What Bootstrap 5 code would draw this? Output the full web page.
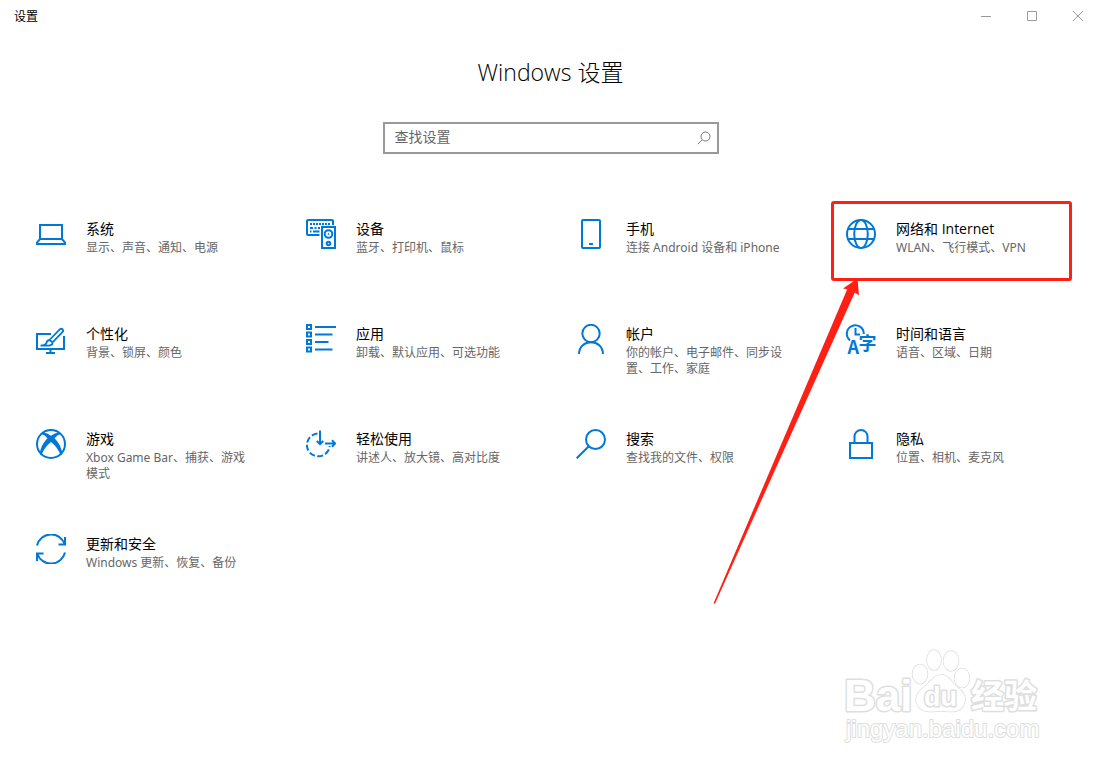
<!DOCTYPE html>
<html lang="zh-CN">
<head>
<meta charset="utf-8">
<meta name="viewport" content="width=device-width, initial-scale=1">
<title>设置</title>
<link href="https://cdn.jsdelivr.net/npm/bootstrap@5.3.0/dist/css/bootstrap.min.css" rel="stylesheet">
<style>
  body { font-family: "Noto Sans", "Noto Sans CJK SC", sans-serif; color: #000; background: #fff; }
  .window { min-height: 100vh; overflow: hidden; }
  .titlebar { height: 32px; font-size: 12px; padding-left: 14px; }
  .titlebar-name { padding-top: 2px; }
  .caption-btn { width: 46px; height: 32px; color: #999; }
  .page-title { font-family: "Open Sans", "Noto Sans CJK SC", sans-serif; font-size: 23px; line-height: 32px; font-weight: 300; margin-top: 24px; }
  .search-box { width: 336px; max-width: 100%; height: 32px; margin-top: 34px; border: 2px solid #999; }
  .search-box input { font-size: 14px; line-height: 20px; padding: 0 10px 2px; color: #000; }
  .search-box input::placeholder { color: #666; opacity: 1; }
  .search-box button { width: 28px; color: #777; }
  .categories { padding: 47px 10px 0 11px; }
  .category { padding: 0 19px 25px 10px; }
  .tile { min-height: 80px; padding: 15px 12px 0; gap: 20px; border: 3px solid transparent; border-radius: 3px; color: #000; }
  .tile-icon { width: 30px; height: 30px; fill: none; stroke: #0078d7; stroke-width: 2; color: #0078d7; }
  .tile-name { font-family: "Open Sans", "Noto Sans CJK SC", sans-serif; font-size: 14px; line-height: 20px; }
  .tile-info { font-size: 12px; line-height: 16px; padding-top: 1px; color: #666; }
  .marked { border-color: #ff1f14; }
  .pointer { left: -119px; top: 77px; width: 150px; height: 328px; fill: #ff1f14; pointer-events: none; z-index: 2; }
  .watermark { right: 51px; bottom: 18px; width: 210px; height: 105px; fill: #fff; stroke: #dedede; }
</style>
</head>
<body>
<div class="window position-relative">
  <header class="titlebar d-flex align-items-center">
    <span class="titlebar-name me-auto">设置</span>
    <button type="button" class="caption-btn btn border-0 rounded-0 p-0 d-flex align-items-center justify-content-center" aria-label="最小化"><svg width="12" height="12" stroke="currentColor"><path d="M1 6.500H11"/></svg></button>
    <button type="button" class="caption-btn btn border-0 rounded-0 p-0 d-flex align-items-center justify-content-center" aria-label="最大化"><svg width="12" height="12" stroke="currentColor" fill="none"><path d="M1.500 1.500H10.500V10.500H1.500Z"/></svg></button>
    <button type="button" class="caption-btn btn border-0 rounded-0 p-0 d-flex align-items-center justify-content-center" aria-label="关闭"><svg width="12" height="12" stroke="currentColor"><path d="M1 1L11 11M11 1L1 11"/></svg></button>
  </header>

  <main>
    <h1 class="page-title text-center mb-0">Windows 设置</h1>
    <form class="search-box d-flex mx-auto" role="search">
      <input type="text" class="form-control border-0 rounded-0 shadow-none bg-transparent" placeholder="查找设置" aria-label="查找设置">
      <button type="button" class="btn border-0 p-0 d-flex align-items-center justify-content-center" aria-label="搜索"><svg width="14" height="14" fill="none" stroke="currentColor"><circle cx="8.500" cy="5.500" r="4.500"/><path d="M5.300 8.700L.8 13.200"/></svg></button>
    </form>

    <nav class="categories" aria-label="设置类别">
      <div class="row g-0">
        <div class="category col-12 col-sm-6 col-md-4 col-lg-3">
          <a href="#system" class="tile d-flex text-decoration-none">
            <svg class="tile-icon flex-shrink-0" viewBox="0 0 30 30"><path d="M4 19.500V6H26V19.500M4 20H26L29 23.500V25H1V23.500Z"/></svg>
            <div><div class="tile-name">系统</div><div class="tile-info">显示、声音、通知、电源</div></div>
          </a>
        </div>
        <div class="category col-12 col-sm-6 col-md-4 col-lg-3">
          <a href="#devices" class="tile d-flex text-decoration-none">
            <svg class="tile-icon flex-shrink-0" viewBox="0 0 30 30"><path d="M13.500 16H2Q1 16 1 15V2Q1 1 2 1H26Q27 1 27 2V6M16 8H29V29H16Z"/><path stroke-dasharray="2 1" d="M4 5H25"/><path d="M4 9H7M8.500 9H10.500M12 9H14M4 12.500H5.500M7 12.500H13.500"/><circle cx="22.500" cy="15" r="3.800"/><circle cx="22.500" cy="24.500" r="1.800"/><circle cx="22.500" cy="15" r=".6" stroke-width="1"/></svg>
            <div><div class="tile-name">设备</div><div class="tile-info">蓝牙、打印机、鼠标</div></div>
          </a>
        </div>
        <div class="category col-12 col-sm-6 col-md-4 col-lg-3">
          <a href="#phone" class="tile d-flex text-decoration-none">
            <svg class="tile-icon flex-shrink-0" viewBox="0 0 30 30"><rect x="6" y="1" width="18" height="28" rx="1"/><path d="M13 25H17"/></svg>
            <div><div class="tile-name">手机</div><div class="tile-info">连接 Android 设备和 iPhone</div></div>
          </a>
        </div>
        <div class="category col-12 col-sm-6 col-md-4 col-lg-3">
          <div class="position-relative">
            <a href="#network" class="tile marked d-flex text-decoration-none">
              <svg class="tile-icon flex-shrink-0" viewBox="0 0 30 30"><circle cx="15" cy="15" r="14"/><ellipse cx="15" cy="15" rx="6.800" ry="14"/><path d="M2 10H28M2 20H28"/></svg>
              <div><div class="tile-name">网络和 Internet</div><div class="tile-info">WLAN、飞行模式、VPN</div></div>
            </a>
            <svg class="pointer position-absolute" viewBox="712 278 150 328" aria-hidden="true"><path d="M857.500 278.500L859 295.300L854.800 292.500L715 603.700L713.600 603.200L847.200 289.200L843 288.600Z"/></svg>
          </div>
        </div>

        <div class="category col-12 col-sm-6 col-md-4 col-lg-3">
          <a href="#personalization" class="tile d-flex text-decoration-none">
            <svg class="tile-icon flex-shrink-0" viewBox="0 0 30 30"><path d="M15 10H1V25H28V12M14.500 25V29M10 29H19"/><path stroke-width="1.800" d="M13.500 16L23.500 5.600Q25.200 4.200 26.600 5.200Q27.800 6.600 26.400 8.200L16.500 18.300M13.500 16L16.500 18.300M13.500 16Q10.500 16.500 10.300 19.500Q9 21.500 4.500 21.600H13Q17 21 16.500 18.300"/></svg>
            <div><div class="tile-name">个性化</div><div class="tile-info">背景、锁屏、颜色</div></div>
          </a>
        </div>
        <div class="category col-12 col-sm-6 col-md-4 col-lg-3">
          <a href="#apps" class="tile d-flex text-decoration-none">
            <svg class="tile-icon flex-shrink-0" viewBox="0 0 30 30"><path d="M1 1H5V5H1ZM1 8.500H5V12.500H1ZM1 16H5V20H1ZM1 23.500H5V27.500H1ZM9 3H30M9 10.500H26.500M9 18H22.500M9 25.500H26.500"/></svg>
            <div><div class="tile-name">应用</div><div class="tile-info">卸载、默认应用、可选功能</div></div>
          </a>
        </div>
        <div class="category col-12 col-sm-6 col-md-4 col-lg-3">
          <a href="#accounts" class="tile d-flex text-decoration-none">
            <svg class="tile-icon flex-shrink-0" viewBox="0 0 30 30"><circle cx="15" cy="9.500" r="8.700"/><path d="M3 30.500C3 22 9 18.200 15 18.200S27 22 27 30.500"/></svg>
            <div><div class="tile-name">帐户</div><div class="tile-info">你的帐户、电子邮件、同步设置、工作、家庭</div></div>
          </a>
        </div>
        <div class="category col-12 col-sm-6 col-md-4 col-lg-3">
          <a href="#time" class="tile d-flex text-decoration-none">
            <svg class="tile-icon flex-shrink-0 overflow-visible" viewBox="0 0 30 30"><path d="M4 16.400A8.500 8.500 0 1 1 17.800 10M9.500 4V10.500H14"/><g fill="#0078d7" stroke="none"><text x="1.500" y="30" font-size="18" font-weight="600" font-family="Noto Sans CJK SC, sans-serif">A</text><text x="12.500" y="26" font-size="18" font-weight="700" font-family="Noto Sans CJK SC, sans-serif">字</text></g></svg>
            <div><div class="tile-name">时间和语言</div><div class="tile-info">语音、区域、日期</div></div>
          </a>
        </div>

        <div class="category col-12 col-sm-6 col-md-4 col-lg-3">
          <a href="#gaming" class="tile d-flex text-decoration-none">
            <svg class="tile-icon flex-shrink-0" viewBox="0 0 30 30"><circle cx="15" cy="15" r="14"/><path fill="#0078d7" stroke="none" d="M7 3.800Q11 3.500 15 6.800Q19 3.500 23 3.800L24.500 5.300Q21.500 5.500 18.600 9.300Q25.500 16.500 26.300 25L24.600 26.500Q22 18.500 15 13Q8 18.500 5.400 26.500L3.700 25Q4.500 16.500 11.400 9.300Q8.500 5.500 5.500 5.300Z"/></svg>
            <div><div class="tile-name">游戏</div><div class="tile-info">Xbox Game Bar、捕获、游戏模式</div></div>
          </a>
        </div>
        <div class="category col-12 col-sm-6 col-md-4 col-lg-3">
          <a href="#ease" class="tile d-flex text-decoration-none">
            <svg class="tile-icon flex-shrink-0" viewBox="0 0 30 30"><path stroke-dasharray="6 2.400" d="M11.500 4.600A11.400 11.400 0 1 0 23.700 17"/><path d="M14 1.500V15M19 14.500H29M10.800 12L14 15.200L17.200 12M26 11.300L29.200 14.500L26 17.700"/></svg>
            <div><div class="tile-name">轻松使用</div><div class="tile-info">讲述人、放大镜、高对比度</div></div>
          </a>
        </div>
        <div class="category col-12 col-sm-6 col-md-4 col-lg-3">
          <a href="#search" class="tile d-flex text-decoration-none">
            <svg class="tile-icon flex-shrink-0" viewBox="0 0 30 30"><circle cx="19.500" cy="10.500" r="9.500"/><path d="M12.800 17.200L.7 29.300"/></svg>
            <div><div class="tile-name">搜索</div><div class="tile-info">查找我的文件、权限</div></div>
          </a>
        </div>
        <div class="category col-12 col-sm-6 col-md-4 col-lg-3">
          <a href="#privacy" class="tile d-flex text-decoration-none">
            <svg class="tile-icon flex-shrink-0" viewBox="0 0 30 30"><path d="M4 14H26V29H4ZM8.500 14V7.500A6.500 6.500 0 0 1 21.500 7.500V14"/></svg>
            <div><div class="tile-name">隐私</div><div class="tile-info">位置、相机、麦克风</div></div>
          </a>
        </div>

        <div class="category col-12 col-sm-6 col-md-4 col-lg-3">
          <a href="#update" class="tile d-flex text-decoration-none">
            <svg class="tile-icon flex-shrink-0" viewBox="0 0 30 30"><path d="M1 11.500A14.400 14.400 0 0 1 28.600 10M29 3V10.500H22.500M29 18.500A14.400 14.400 0 0 1 1.400 20M1 27V19.500H7.500"/></svg>
            <div><div class="tile-name">更新和安全</div><div class="tile-info">Windows 更新、恢复、备份</div></div>
          </a>
        </div>
      </div>
    </nav>
  </main>

  <svg class="watermark position-absolute" viewBox="840 645 210 105" role="img" aria-label="Baidu 经验">
    <g font-weight="700" stroke-width="3" paint-order="stroke" stroke-linejoin="round">
      <text x="844" y="711" font-size="44" font-family="Liberation Sans, sans-serif">Bai</text>
      <ellipse cx="920" cy="674" rx="7.500" ry="9.500" stroke-width="1.500"/>
      <ellipse cx="934" cy="660" rx="7" ry="10" stroke-width="1.500"/>
      <ellipse cx="951" cy="661" rx="7.500" ry="10" stroke-width="1.500"/>
      <ellipse cx="962" cy="678" rx="7.500" ry="9.500" stroke-width="1.500"/>
      <path stroke-width="1.500" d="M941 675C949 675 952 683 958 688C965 693 967 699 963 706C958 714 948 711 941 711C934 711 924 714 918 706C914 699 917 693 923 688C930 683 933 675 941 675Z"/>
      <text x="924" y="706" font-size="27" font-family="Liberation Sans, sans-serif">du</text>
      <text x="971" y="708" font-size="33" font-family="Noto Sans CJK SC, sans-serif">经验</text>
    </g>
    <text x="846" y="737" font-size="24" font-family="Liberation Sans, sans-serif" stroke-width="2" paint-order="stroke" stroke-linejoin="round">jingyan.baidu.com</text>
  </svg>
</div>
<script src="https://cdn.jsdelivr.net/npm/bootstrap@5.3.0/dist/js/bootstrap.bundle.min.js"></script>
</body>
</html>
